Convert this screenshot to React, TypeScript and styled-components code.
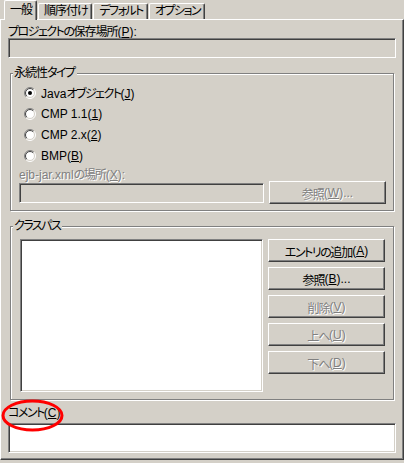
import React from "react";
import styled, { createGlobalStyle } from "styled-components";

const Global = createGlobalStyle`
  html, body { margin: 0; padding: 0; background: #d4d0c8; }
  body { font-family: "Liberation Sans", "Noto Sans CJK JP", sans-serif; font-size: 12px; }
`;

const FACE = "#d4d0c8";
const SHADOW = "#808080";
const DARK = "#404040";

const Window = styled.div`
  position: relative;
  width: 404px;
  height: 463px;
  background: ${FACE};
  display: flex;
  flex-direction: column;
  font-family: "Liberation Sans", "Noto Sans CJK JP", sans-serif;
  font-feature-settings: "palt";
  font-size: 12px;
  color: #000;
  overflow: hidden;
`;

const Cjk = styled.span<{ $kana?: boolean }>`
  letter-spacing: ${(p) => (p.$kana ? -1.5 : -1)}px;
`;

const Mn = styled.span`
  text-decoration: underline;
  text-underline-offset: 1px;
`;

const KANA = /[\u3040-\u30ff]/;
const CJK = /[\u3000-\u30ff\u4e00-\u9fff\uff00-\uffef]/;

function T({ text }: { text: string }) {
  const parts = text.split(/([\u3040-\u30ff]+|[\u3000-\u303f\u4e00-\u9fff\uff00-\uffef]+)/);
  return (
    <>
      {parts.map((p, i) =>
        p === "" ? null : CJK.test(p) ? (
          <Cjk key={i} $kana={KANA.test(p)}>
            {p}
          </Cjk>
        ) : (
          <React.Fragment key={i}>{p}</React.Fragment>
        )
      )}
    </>
  );
}

function Caption({ text, mn, tail = "" }: { text: string; mn?: string; tail?: string }) {
  return (
    <>
      <T text={text} />
      {mn && (
        <>
          (<Mn>{mn}</Mn>)
        </>
      )}
      {tail}
    </>
  );
}

const TabStrip = styled.div`
  display: flex;
  align-items: flex-end;
  height: 19px;
  padding-left: 4px;
  gap: 1px;
  position: relative;
  z-index: 1;
`;

const Tab = styled.div<{ $active?: boolean }>`
  box-sizing: border-box;
  height: ${(p) => (p.$active ? 20 : 16)}px;
  margin-bottom: ${(p) => (p.$active ? -1 : 0)}px;
  padding: ${(p) => (p.$active ? "3px" : "1px")} 4px 0 5px;
  background: ${FACE};
  border-top: 1px solid #fff;
  border-left: 1px solid #fff;
  border-right: 1px solid ${DARK};
  border-radius: 2px 2px 0 0;
  box-shadow: inset -1px 0 0 ${SHADOW};
  line-height: 13px;
  white-space: nowrap;
`;

const Panel = styled.div`
  box-sizing: border-box;
  height: 441px;
  border-top: 1px solid #fff;
  border-left: 1px solid #fff;
  border-right: 1px solid ${DARK};
  border-bottom: 1px solid ${DARK};
  box-shadow: inset -1px -1px 0 ${SHADOW};
  padding: 6px 7px 0 7px;
  display: flex;
  flex-direction: column;
`;

const Label = styled.div<{ $disabled?: boolean; $mt?: number }>`
  height: 12px;
  line-height: 12px;
  margin-top: ${(p) => p.$mt ?? 0}px;
  white-space: nowrap;
  color: ${(p) => (p.$disabled ? SHADOW : "#000")};
  text-shadow: ${(p) => (p.$disabled ? "1px 1px 0 #fff" : "none")};
`;

const Field = styled.div<{ $white?: boolean; $h: number }>`
  box-sizing: border-box;
  height: ${(p) => p.$h}px;
  background: ${(p) => (p.$white ? "#fff" : FACE)};
  border: 1px solid;
  border-color: ${SHADOW} #fff #fff ${SHADOW};
  box-shadow: inset 1px 1px 0 ${DARK}, inset -1px -1px 0 ${FACE};
`;

const GrowField = styled(Field)`
  flex: 1;
`;

const Group = styled.div<{ $mt: number }>`
  position: relative;
  box-sizing: border-box;
  margin: ${(p) => p.$mt}px 2px 0 2px;
  border: 1px solid ${SHADOW};
  box-shadow: inset 1px 1px 0 #fff, 1px 1px 0 #fff;
`;

const Legend = styled.div`
  position: absolute;
  top: -7px;
  left: 2px;
  padding: 0 2px 0 1px;
  background: ${FACE};
  line-height: 12px;
`;

const PersistBody = styled.div`
  padding: 8px 7px 6px 8px;
  display: flex;
  flex-direction: column;
`;

const RadioRow = styled.label`
  display: flex;
  align-items: center;
  height: 21px;
  padding-left: 5px;
  gap: 5px;
  white-space: nowrap;
`;

const FileRow = styled.div`
  display: flex;
  align-items: center;
  gap: 5px;
  height: 23px;
`;

const Button = styled.div<{ $disabled?: boolean }>`
  box-sizing: border-box;
  width: 117px;
  height: 23px;
  display: flex;
  align-items: center;
  justify-content: center;
  background: ${FACE};
  border: 1px solid;
  border-color: #fff ${DARK} ${DARK} #fff;
  box-shadow: inset -1px -1px 0 ${SHADOW};
  white-space: nowrap;
  color: ${(p) => (p.$disabled ? SHADOW : "#000")};
  text-shadow: ${(p) => (p.$disabled ? "1px 1px 0 #fff" : "none")};
  padding-top: 1px;
`;

const ClassBody = styled.div`
  display: flex;
  gap: 5px;
  padding: 12px 8px 7px 9px;
`;

const ListBox = styled(Field)`
  flex: 1;
`;

const ButtonColumn = styled.div`
  display: flex;
  flex-direction: column;
  gap: 5px;
`;

const CommentLabel = styled(Label)`
  margin-top: 7px;
`;

const CommentField = styled(Field)`
  margin-top: 4px;
`;

const Annotation = styled.svg`
  position: absolute;
  left: 1px;
  top: 399px;
`;

const RadioSvg = styled.svg`
  flex: none;
  display: block;
`;

function arc(r: number, firstHalf: boolean) {
  const c = 6;
  const d = r * Math.SQRT1_2;
  const a = `${c - d} ${c + d}`;
  const b = `${c + d} ${c - d}`;
  return firstHalf
    ? `M ${a} A ${r} ${r} 0 0 1 ${b}`
    : `M ${b} A ${r} ${r} 0 0 1 ${a}`;
}

const Radio = ({ checked }: { checked?: boolean }) => (
  <RadioSvg width="12" height="12" viewBox="0 0 12 12">
    <circle cx="6" cy="6" r="5" fill="#fff" />
    <path d={arc(5.5, true)} stroke={SHADOW} fill="none" />
    <path d={arc(5.5, false)} stroke="#fff" fill="none" />
    <path d={arc(4.5, true)} stroke={DARK} fill="none" />
    <path d={arc(4.5, false)} stroke={FACE} fill="none" />
    {checked && <circle cx="6" cy="6" r="2" fill="#000" />}
  </RadioSvg>
);

const tabs = ["一般", "順序付け", "デフォルト", "オプション"];

const radios: { label: string; mn: string; checked?: boolean }[] = [
  { label: "Javaオブジェクト", mn: "J", checked: true },
  { label: "CMP 1.1", mn: "1" },
  { label: "CMP 2.x", mn: "2" },
  { label: "BMP", mn: "B" },
];

const buttons: { label: string; mn: string; dots?: boolean; disabled?: boolean }[] = [
  { label: "エントリの追加", mn: "A" },
  { label: "参照", mn: "B", dots: true },
  { label: "削除", mn: "V", disabled: true },
  { label: "上へ", mn: "U", disabled: true },
  { label: "下へ", mn: "D", disabled: true },
];

export default function App() {
  return (
    <>
      <Global />
      <Window>
        <TabStrip>
          {tabs.map((t, i) => (
            <Tab key={t} $active={i === 0}>
              <T text={t} />
            </Tab>
          ))}
        </TabStrip>
        <Panel>
          <Label>
            <Caption text="プロジェクトの保存場所" mn="P" tail=":" />
          </Label>
          <Field $h={20} />
          <Group $mt={15}>
            <Legend>
              <T text="永続性タイプ" />
            </Legend>
            <PersistBody>
              {radios.map((r) => (
                <RadioRow key={r.label}>
                  <Radio checked={r.checked} />
                  <span>
                    <Caption text={r.label} mn={r.mn} />
                  </span>
                </RadioRow>
              ))}
              <Label $disabled $mt={3}>
                <Caption text="ejb-jar.xmlの場所" mn="X" tail=":" />
              </Label>
              <FileRow>
                <GrowField $h={20} />
                <Button $disabled>
                  <Caption text="参照" mn="W" tail="..." />
                </Button>
              </FileRow>
            </PersistBody>
          </Group>
          <Group $mt={15}>
            <Legend>
              <T text="クラスパス" />
            </Legend>
            <ClassBody>
              <ListBox $white $h={153} />
              <ButtonColumn>
                {buttons.map((b) => (
                  <Button key={b.label} $disabled={b.disabled}>
                    <Caption text={b.label} mn={b.mn} tail={b.dots ? "..." : ""} />
                  </Button>
                ))}
              </ButtonColumn>
            </ClassBody>
          </Group>
          <CommentLabel>
            <Caption text="コメント" mn="C" />
          </CommentLabel>
          <CommentField $white $h={30} />
        </Panel>
        <Annotation width="64" height="34" viewBox="0 0 64 34">
          <ellipse cx="31.5" cy="16.5" rx="29.5" ry="14.5" fill="none" stroke="#ff0000" strokeWidth="3" />
        </Annotation>
      </Window>
    </>
  );
}
